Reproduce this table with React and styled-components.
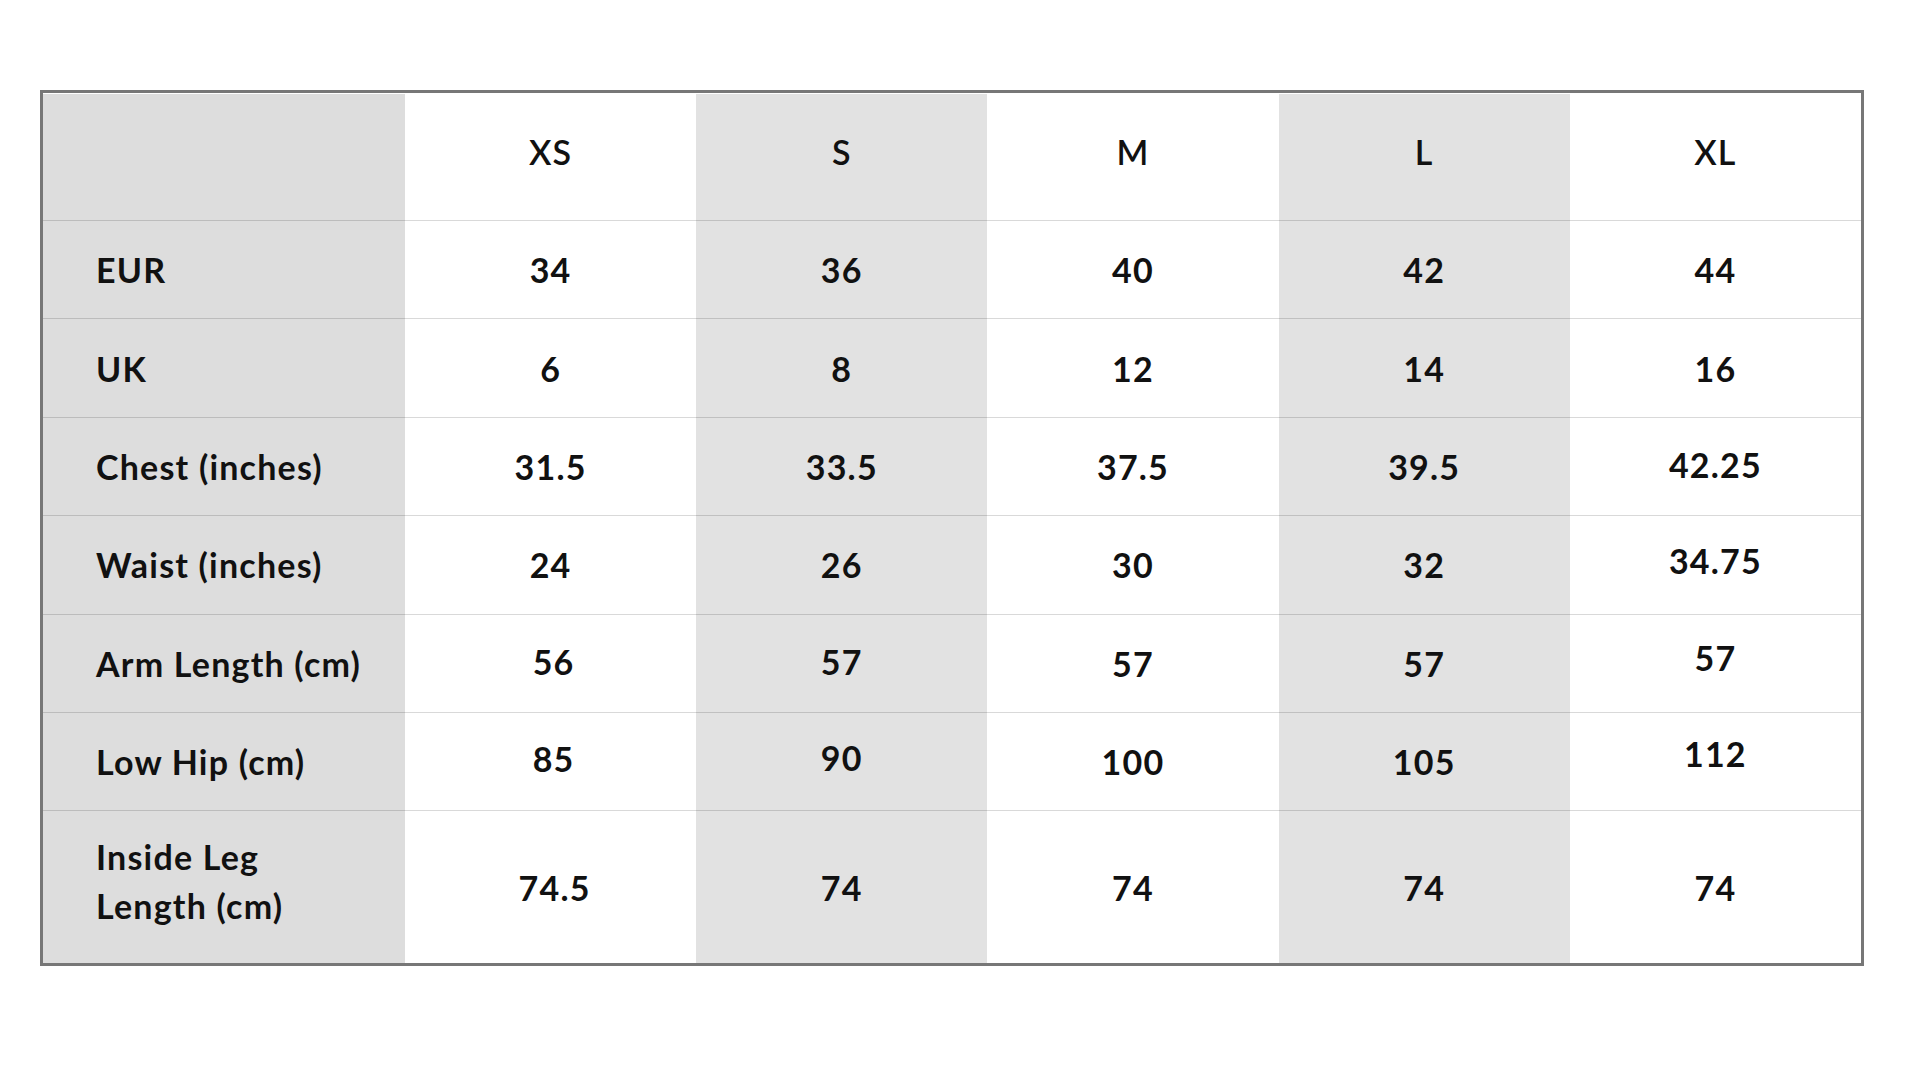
import React from "react";
import styled, { createGlobalStyle } from "styled-components";

// ===== 전역 스타일 =====
const GlobalStyle = createGlobalStyle`
  html, body { margin: 0; padding: 0; background: #fff; }
  body { font-family: "Lato", "Open Sans", sans-serif; color: #111; }
`;

// ===== 데이터 =====
const SIZES = ["XS", "S", "M", "L", "XL"];

// dy: 원본 이미지에서 살짝 위로 올라간 숫자 보정
const c = (v, dy = 0, dx = 0) => ({ v, dy, dx });

const ROWS = [
  { label: "EUR", values: [c("34"), c("36"), c("40"), c("42"), c("44")] },
  { label: "UK", values: [c("6"), c("8"), c("12"), c("14"), c("16")] },
  { label: "Chest (inches)", values: [c("31.5"), c("33.5"), c("37.5"), c("39.5"), c("42.25", -2)] },
  { label: "Waist (inches)", values: [c("24"), c("26"), c("30"), c("32"), c("34.75", -4)] },
  { label: "Arm Length (cm)", values: [c("56", -2, 3), c("57", -2), c("57"), c("57"), c("57", -6)] },
  { label: "Low Hip (cm)", values: [c("85", -3, 3), c("90", -4), c("100"), c("105"), c("112", -8)] },
  { label: <>Inside Leg<br />Length (cm)</>, values: [c("74.5", 0, 4), c("74"), c("74"), c("74"), c("74")], tall: true },
];

// S, L 열만 회색
const toneFor = (i) => (i === 1 || i === 3 ? "alt" : "plain");

export default function App() {
  return (
    <>
      <GlobalStyle />
      <Page>
        <Table>
          <Cell $tone="label" />
          {SIZES.map((s, i) => (
            <HeadCell key={s} $tone={toneFor(i)}>{s}</HeadCell>
          ))}

          {ROWS.map((row, r) => {
            const last = r === ROWS.length - 1;
            return (
              <React.Fragment key={r}>
                <LabelCell $tone="label" $last={last} $tall={row.tall}>{row.label}</LabelCell>
                {row.values.map((cell, i) => (
                  <Cell key={i} $tone={toneFor(i)} $last={last}>
                    <Value $dy={cell.dy} $dx={cell.dx}>{cell.v}</Value>
                  </Cell>
                ))}
              </React.Fragment>
            );
          })}
        </Table>
      </Page>
    </>
  );
}

/* ===== 레이아웃 ===== */
const Page = styled.div`
  width: 1920px;
  height: 1080px;
  padding: 90px 0 0 40px;
  box-sizing: border-box;
`;

const Table = styled.div`
  width: 1824px;
  box-sizing: border-box;
  border: 3px solid #777;
  padding-top: 1px;
  background: #fff;
  display: grid;
  grid-template-columns: 362px repeat(5, 1fr);
  grid-template-rows: 127px repeat(6, 98.4px) 152px;
`;

const TONES = {
  label: "#dddddd",
  alt: "#e2e2e2",
  plain: "#ffffff",
};

const Cell = styled.div`
  box-sizing: border-box;
  display: flex;
  align-items: center;
  justify-content: center;
  background: ${({ $tone }) => TONES[$tone]};
  border-bottom: ${({ $last }) => ($last ? "none" : "1px solid rgba(0,0,0,0.15)")};
  font-size: 34px;
  font-weight: 700;
  letter-spacing: 1.2px;
  color: #111;
`;

const HeadCell = styled(Cell)`
  font-weight: 600;
  padding-bottom: 12px;
`;

const LabelCell = styled(Cell)`
  justify-content: flex-start;
  padding-left: 53px;
  padding-bottom: ${({ $tall }) => ($tall ? "12px" : "0")};
  line-height: 49px;
`;

const Value = styled.span`
  transform: translate(${({ $dx }) => $dx || 0}px, ${({ $dy }) => $dy || 0}px);
`;
